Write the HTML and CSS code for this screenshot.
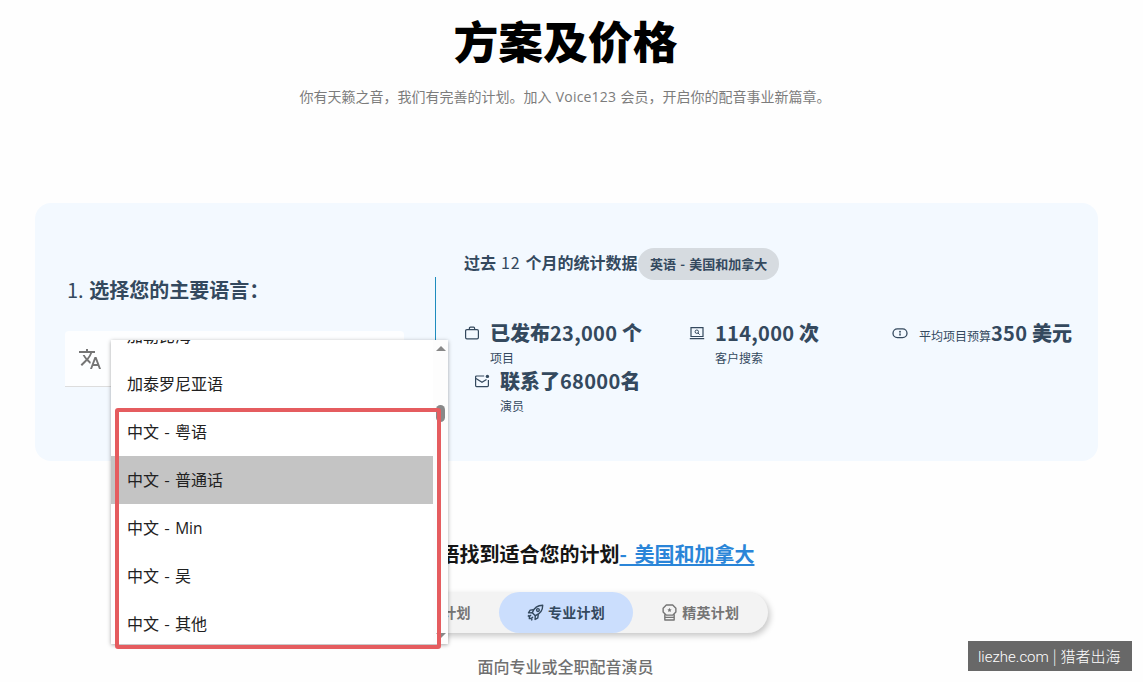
FILE: index.html
```
<!DOCTYPE html>
<html lang="zh-CN">
<head>
  <meta charset="UTF-8" />
  <meta name="viewport" content="width=device-width, initial-scale=1.0"/>
  <title>方案及价格</title>
  <link rel="stylesheet" href="styles.css">
</head>
<body>

<header class="hero">
  <h1>方案及价格</h1>
  <p>你有天籁之音，我们有完善的计划。加入 <span class="latin">Voice123</span> 会员，开启你的配音事业新篇章。</p>
</header>

<section class="panel">
  <div class="language">
    <h2><span class="num">1.</span> 选择您的主要语言：</h2>
    <div class="select">
      <svg class="translate" viewBox="0 0 24 24"><path fill="currentColor" d="M12.87 15.07l-2.54-2.51.03-.03A17.5 17.5 0 0 0 14.07 6H17V4h-7V2H8v2H1v2h11.17C11.5 7.92 10.44 9.75 9 11.35 8.07 10.32 7.3 9.19 6.69 8h-2c.73 1.63 1.73 3.17 2.98 4.56l-5.09 5.02L4 19l5-5 3.11 3.11.76-2.04zM18.5 10h-2L12 22h2l1.12-3h4.75L21 22h2l-4.5-12zm-2.62 7l1.62-4.33L19.12 17h-3.24z"/></svg>
      <div class="menu">
        <ul class="options">
          <li>加勒比海</li>
          <li>加泰罗尼亚语</li>
          <li>中文 - 粤语</li>
          <li class="selected">中文 - 普通话</li>
          <li>中文 - <span class="latin">Min</span></li>
          <li>中文 - 吴</li>
          <li>中文 - 其他</li>
        </ul>
        <div class="scrollbar">
          <span class="arrow up"></span>
          <span class="thumb"></span>
          <span class="arrow down"></span>
        </div>
        <div class="highlight"></div>
      </div>
    </div>
  </div>

  <div class="divider"></div>

  <div class="stats">
    <div class="stats-title">
      <h3>过去 <span class="num">12</span> 个月的统计数据</h3>
      <span class="chip">英语 - 美国和加拿大</span>
    </div>
    <div class="stats-grid">
      <div class="stat">
        <svg viewBox="0 0 16 16" fill="none" stroke="currentColor" stroke-width="1.2"><rect x="1.6" y="4.6" width="12.8" height="9.2" rx="1.3"/><path d="M5.4 4.6V3.2q0-1 1-1h3.2q1 0 1 1v1.4"/></svg>
        <div><strong>已发布<span class="digits">23,000</span> 个</strong><small>项目</small></div>
      </div>
      <div class="stat">
        <svg viewBox="0 0 16 16" fill="none" stroke="currentColor" stroke-width="1.2"><path d="M2 11.5V2.6h12v8.9zM.8 13.6h14.4"/><circle cx="7.8" cy="6.7" r="1.7" stroke-width="1"/><path d="M9 8l1.6 1.6" stroke-width="1"/></svg>
        <div><strong><span class="digits">114,000</span> 次</strong><small>客户搜索</small></div>
      </div>
      <div class="stat">
        <svg viewBox="0 0 16 16" fill="none" stroke="currentColor" stroke-width="1.3"><rect x="1" y="3.8" width="14" height="8.8" rx="4.4"/><path d="M8 5.8v4.8M7.2 6.6h1.6M7.2 9.8h1.6" stroke-width=".9"/></svg>
        <div class="budget"><small>平均项目预算</small><strong><span class="digits">350</span> 美元</strong></div>
      </div>
      <div class="stat indented">
        <svg viewBox="0 0 16 16" fill="none" stroke="currentColor" stroke-width="1.2"><path d="M10.2 3H2.6q-1 0-1 1v8.6q0 1 1 1h10.8q1 0 1-1V7"/><path d="M2 5.4l6 3.8 4.5-2.8"/><circle cx="13.4" cy="3.4" r="1.7" fill="currentColor" stroke="none"/></svg>
        <div><strong>联系了<span class="digits">68000</span>名</strong><small>演员</small></div>
      </div>
    </div>
  </div>
</section>

<section class="plans">
  <h2>使用英语找到适合您的计划<a href="#">- 美国和加拿大</a></h2>
  <div class="tabs">
    <div class="tab">
      <svg viewBox="0 0 16 16" fill="none" stroke="currentColor" stroke-width="1.3"><circle cx="8" cy="8" r="6"/><path d="M8 5v6M5 8h6"/></svg>
      入门计划
    </div>
    <div class="tab active">
      <svg viewBox="0 0 16 16" fill="none" stroke="currentColor" stroke-width="1.3" stroke-linejoin="round"><path d="M5 8.2C6.5 4 10 1.2 14.8 1.2 14.8 6 12 9.5 7.8 11z"/><path d="M6.2 5.4L3 5.8 1.4 8.4l3.6-.2M10.6 9.8l-.4 3.2-2.6 1.6.2-3.6"/><circle cx="10.3" cy="5.7" r="1.3"/><path d="M4 10.5q-2 .4-1.8 3.3Q5 14 5.5 12M.8 11.7l1.3-1.2M3.8 15.2l1.3-.8"/></svg>
      专业计划
    </div>
    <div class="tab">
      <svg viewBox="0 0 16 16" fill="none" stroke="currentColor" stroke-width="1.3" stroke-linejoin="round"><path d="M5 .9h6l3 3v3.6l-3 3H5l-3-3V3.900z"/><path d="M3.600 9.600v5.500h8.800V9.600M3.600 12.600h8.800"/><path d="M8 3.600l.6 1.300 1.400.2-1 1 .2 1.400L8 6.800l-1.200.7.2-1.400-1-1 1.400-.2z" fill="currentColor" stroke="none"/></svg>
      精英计划
    </div>
  </div>
  <p>面向专业或全职配音演员</p>
</section>

<div class="watermark"><span>liezhe.com</span> | 猎者出海</div>

</body>
</html>
```
FILE: styles.css
```
* {
  box-sizing: border-box;
}

body {
  margin: 0;
  padding: 0 10px 0 0;
  height: 682px;
  overflow: hidden;
  background: #fefefe;
  font-family: "Noto Sans CJK SC", sans-serif;
  color: #34495e;
}

h1, h2, h3, p, ul {
  margin: 0;
  padding: 0;
}

.latin {
  font-family: "Open Sans", sans-serif;
}

.num {
  font-weight: 400;
}

.hero {
  height: 203px;
  padding-top: 8px;
  text-align: center;
}

.hero h1 {
  margin-right: 2px;
  font-size: 44.8px;
  line-height: 64px;
  font-weight: 900;
  color: #000;
}

.hero p {
  margin: 13px 3px 0 0;
  font-size: 14px;
  line-height: 22px;
  color: #7c7c7c;
}

.hero .latin {
  letter-spacing: 0.2px;
  margin: 0 1px;
}

.panel {
  display: flex;
  height: 258px;
  margin: 0 35px;
  padding-left: 30px;
  border-radius: 16px;
  background: #f3f9ff;
}

.language {
  width: 370px;
  padding-top: 73px;
}

.language h2 {
  padding-left: 2px;
  font-size: 20px;
  line-height: 28px;
  font-weight: 700;
  word-spacing: 1px;
}

.select {
  position: relative;
  width: 339px;
  height: 56px;
  margin-top: 27px;
  padding: 16px 13px;
  border-bottom: 1px solid #ddd;
  border-radius: 4px 4px 0 0;
  background: #fdfeff;
}

.translate {
  width: 24px;
  height: 24px;
  color: #757575;
}

.menu {
  position: absolute;
  top: 9px;
  left: 46px;
  z-index: 2;
  display: flex;
  width: 337px;
  height: 304px;
  background: #fff;
  box-shadow: 0 1px 4px rgba(0, 0, 0, 0.35);
}

.options {
  flex: 1;
  overflow: hidden;
  list-style: none;
}

.options li {
  height: 48px;
  padding-left: 16px;
  font-size: 16px;
  line-height: 47px;
  word-spacing: 1.7px;
  color: #212121;
}

.options .latin {
  font-size: 15.5px;
}

.options li:first-child {
  margin-top: -28px;
}

.options .selected {
  background: #c4c4c4;
}

.scrollbar {
  display: flex;
  flex-direction: column;
  align-items: center;
  width: 15px;
  padding: 6px 0;
  background: #fdfdfd;
}

.arrow {
  border: 5px solid transparent;
}

.arrow.up {
  border-top: 0;
  border-bottom-color: #888;
}

.arrow.down {
  margin-top: auto;
  border-bottom: 0;
  border-top-color: #888;
}

.thumb {
  width: 9px;
  height: 17px;
  margin-top: 54px;
  border-radius: 5px;
  background: #888;
}

.highlight {
  position: absolute;
  top: 68px;
  left: 4px;
  width: 326px;
  height: 241px;
  border: 4px solid #e55c5f;
  border-radius: 3px;
}

.divider {
  width: 1px;
  height: 112px;
  margin-top: 74px;
  background: #1e8cbe;
}

.stats {
  padding: 45px 0 0 28px;
}

.stats-title {
  display: flex;
  align-items: center;
  height: 32px;
}

.stats-title h3 {
  width: 174px;
  font-size: 16px;
  line-height: 24px;
  margin-top: -4px;
  font-weight: 700;
  white-space: nowrap;
  word-spacing: 1.4px;
}

.stats-title .num {
  letter-spacing: 0.8px;
}

.chip {
  height: 32px;
  padding: 0 12px;
  border-radius: 16px;
  background: #d6dbe0;
  font-size: 13px;
  line-height: 32px;
  font-weight: 700;
  word-spacing: 1.3px;
}

.stats-grid {
  display: grid;
  grid-template-columns: 225px 203px 190px;
  grid-auto-rows: 48px;
  padding-top: 39px;
}

.stat {
  display: flex;
  gap: 10px;
  white-space: nowrap;
}

.stat svg {
  width: 16px;
  height: 16px;
  margin-top: 6px;
}

.stat strong {
  display: block;
  font-size: 20px;
  line-height: 28px;
  font-weight: 900;
}

.digits {
  font-weight: 700;
  letter-spacing: 0.3px;
}

.stat small {
  display: block;
  font-size: 12px;
  line-height: 22px;
}

.stat .budget {
  display: flex;
  align-items: baseline;
}

.budget small {
  padding-left: 1px;
}

.stat.indented {
  padding-left: 10px;
}

.plans {
  padding: 79px 1px 0 0;
  text-align: center;
}

.plans h2 {
  margin-right: -2px;
  font-size: 20px;
  line-height: 28px;
  font-weight: 700;
  color: #151515;
}

.plans a {
  color: #2a85d8;
  word-spacing: 3px;
  text-underline-offset: 2px;
  text-decoration-thickness: 2px;
}

.tabs {
  display: flex;
  width: 403px;
  height: 41px;
  margin: 24px auto 0;
  border-radius: 21px;
  background: #f3f3f3;
  box-shadow: 2px 3px 6px rgba(0, 0, 0, 0.22);
}

.tab {
  display: flex;
  flex: 1;
  align-items: center;
  justify-content: center;
  gap: 4px;
  padding-bottom: 2px;
  border-radius: 21px;
  font-size: 14px;
  font-weight: 700;
  letter-spacing: 0.25px;
  color: #757575;
}

.tab svg {
  width: 17px;
  height: 17px;
  margin-top: 2px;
}

.tab.active {
  background: #cbdefd;
  color: #34495e;
}

.plans p {
  margin: 21px 1px 0 0;
  font-size: 16px;
  line-height: 24px;
  font-weight: 500;
  color: #707070;
}

.watermark {
  position: fixed;
  right: 11px;
  bottom: 11px;
  width: 164px;
  height: 30px;
  padding-left: 10px;
  background: #686868;
  font-size: 15px;
  line-height: 30px;
  font-weight: 300;
  word-spacing: 0.6px;
  white-space: nowrap;
  color: #fff;
}

.watermark span {
  font-family: Roboto, sans-serif;
}
```
